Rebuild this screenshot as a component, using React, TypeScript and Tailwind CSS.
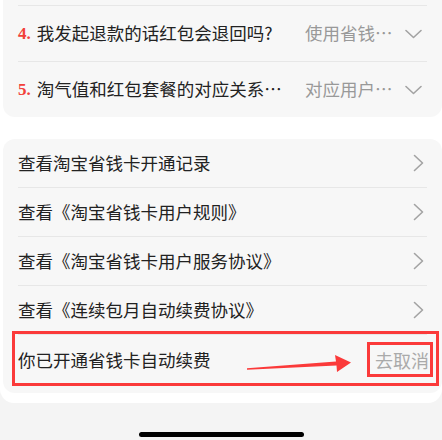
import React from 'react';

const faqs = [
  { no: '4.', title: '我发起退款的话红包会退回吗?', sub: '使用省钱…' },
  { no: '5.', title: '淘气值和红包套餐的对应关系…', sub: '对应用户…' },
];

const links = [
  '查看淘宝省钱卡开通记录',
  '查看《淘宝省钱卡用户规则》',
  '查看《淘宝省钱卡用户服务协议》',
  '查看《连续包月自动续费协议》',
];

const ChevronDown = () => (
  <svg width="17" height="10" viewBox="0 0 17 10" fill="none" className="shrink-0">
    <path d="M1 1.5 L8.5 8.5 L16 1.5" stroke="#a3a3a3" strokeWidth="1.6" strokeLinecap="round" strokeLinejoin="round" />
  </svg>
);

const ChevronRight = () => (
  <svg width="11" height="18" viewBox="0 0 11 18" fill="none" className="shrink-0">
    <path d="M1.5 1.5 L9.5 9 L1.5 16.5" stroke="#a3a3a3" strokeWidth="1.6" strokeLinecap="round" strokeLinejoin="round" />
  </svg>
);

const Divider = () => <div className="mx-[15px] h-px bg-[#e7e7e7]" />;

export default function App() {
  return (
    <div className="relative w-[442px] h-[440px] overflow-hidden bg-[#f4f4f4] font-['Noto_Sans_CJK_SC','Noto_Sans',sans-serif] text-[17.5px] text-[#222]">
      <div className="bg-white rounded-b-[14px] pb-[10px]">
        {/* 常见问题 */}
        <div className="ml-[3px] w-[439px] bg-[#f7f7f7] rounded-b-[12px] pt-[5px]">
          {faqs.map((f) => (
            <React.Fragment key={f.no}>
              <Divider />
              <div className="h-[55px] flex items-center pl-[15px] pr-[20px]">
                <div className="flex-1 min-w-0 flex items-center whitespace-nowrap">
                  <span className="font-['Liberation_Serif',serif] font-bold text-[17px] text-[#f2403a] mr-[6px] shrink-0">
                    {f.no}
                  </span>
                  <span>{f.title}</span>
                </div>
                <span className="w-[100px] shrink-0 whitespace-nowrap text-[#999]">{f.sub}</span>
                <ChevronDown />
              </div>
            </React.Fragment>
          ))}
        </div>

        {/* 链接 */}
        <div className="mt-[22px] ml-[3px] w-[439px] bg-[#f7f7f7] rounded-[12px] pb-[8px]">
          {links.map((l, i) => (
            <React.Fragment key={l}>
              {i > 0 && <Divider />}
              <div className="h-[48px] flex items-center justify-between pl-[15px] pr-[18px]">
                <span>{l}</span>
                <ChevronRight />
              </div>
            </React.Fragment>
          ))}
          <Divider />
          <div className="h-[50px] flex items-center justify-between pl-[15px] pr-[13px]">
            <span>你已开通省钱卡自动续费</span>
            <span className="text-[#aaa] text-[18px]">去取消</span>
          </div>
        </div>
      </div>

      <div className="mt-[29px] mx-auto w-[165px] h-[5px] rounded-full bg-black" />

      {/* 标注 */}
      <div className="absolute left-[12px] top-[331px] w-[427px] h-[55px] border-[3px] border-[#fb3a3a]" />
      <div className="absolute left-[367px] top-[342px] w-[66px] h-[35px] border-[3px] border-[#fb3a3a]" />
      <svg className="absolute left-0 top-0" width="442" height="440" viewBox="0 0 442 440">
        <polygon
          points="247,368.3 336,361.5 335,355 351,362.5 337,372 336.5,365.5 247,369.7"
          fill="#fb3a3a"
        />
      </svg>
    </div>
  );
}
